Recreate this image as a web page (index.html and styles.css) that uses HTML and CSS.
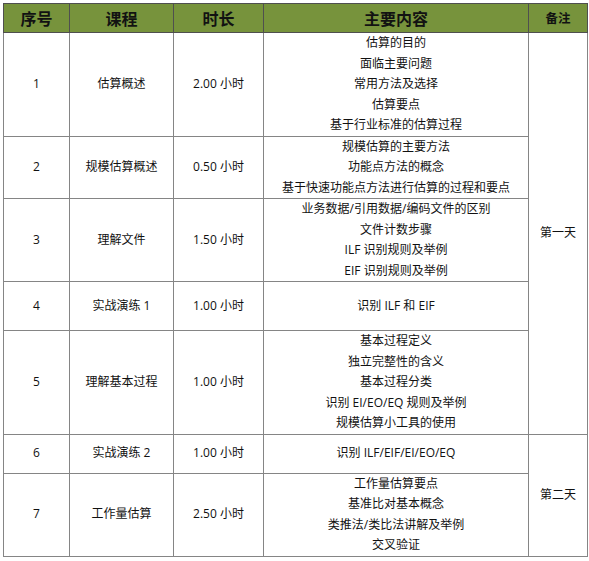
FILE: index.html
```html
<!DOCTYPE html>
<html lang="zh-CN">
<head>
<meta charset="utf-8">
<title>课程安排</title>
<link rel="stylesheet" href="styles.css">
</head>
<body>
<table class="schedule">
  <colgroup>
    <col class="c-no">
    <col class="c-course">
    <col class="c-time">
    <col class="c-content">
    <col class="c-note">
  </colgroup>
  <thead>
    <tr class="head">
      <th>序号</th>
      <th>课程</th>
      <th>时长</th>
      <th>主要内容</th>
      <th class="small">备注</th>
    </tr>
  </thead>
  <tbody>
    <tr class="r1">
      <td>1</td>
      <td>估算概述</td>
      <td>2.00 小时</td>
      <td class="content">估算的目的<br>面临主要问题<br>常用方法及选择<br>估算要点<br>基于行业标准的估算过程</td>
      <td rowspan="5">第一天</td>
    </tr>
    <tr class="r2">
      <td>2</td>
      <td>规模估算概述</td>
      <td>0.50 小时</td>
      <td class="content">规模估算的主要方法<br>功能点方法的概念<br>基于快速功能点方法进行估算的过程和要点</td>
    </tr>
    <tr class="r3">
      <td>3</td>
      <td>理解文件</td>
      <td>1.50 小时</td>
      <td class="content">业务数据/引用数据/编码文件的区别<br>文件计数步骤<br>ILF 识别规则及举例<br>EIF 识别规则及举例</td>
    </tr>
    <tr class="r4">
      <td>4</td>
      <td>实战演练 1</td>
      <td>1.00 小时</td>
      <td class="content">识别 ILF 和 EIF</td>
    </tr>
    <tr class="r5">
      <td>5</td>
      <td>理解基本过程</td>
      <td>1.00 小时</td>
      <td class="content">基本过程定义<br>独立完整性的含义<br>基本过程分类<br>识别 EI/EO/EQ 规则及举例<br>规模估算小工具的使用</td>
    </tr>
    <tr class="r6">
      <td>6</td>
      <td>实战演练 2</td>
      <td>1.00 小时</td>
      <td class="content">识别 ILF/EIF/EI/EO/EQ</td>
      <td rowspan="2">第二天</td>
    </tr>
    <tr class="r7">
      <td>7</td>
      <td>工作量估算</td>
      <td>2.50 小时</td>
      <td class="content">工作量估算要点<br>基准比对基本概念<br>类推法/类比法讲解及举例<br>交叉验证</td>
    </tr>
  </tbody>
</table>
</body>
</html>
```

FILE: styles.css
```css
html, body {
  margin: 0;
  padding: 0;
  background: #ffffff;
}

body {
  padding: 3px 0 0 3px;
  font-family: "Open Sans", "Noto Sans CJK SC", sans-serif;
  font-size: 12px;
  color: #111111;
}

.schedule {
  border-collapse: collapse;
  table-layout: fixed;
  width: 584px;
}

.c-no { width: 66px; }
.c-course { width: 104px; }
.c-time { width: 90px; }
.c-content { width: 265px; }
.c-note { width: 59px; }

.schedule th,
.schedule td {
  border: 1px solid #858585;
  padding: 0;
  text-align: center;
  vertical-align: middle;
  line-height: 20.5px;
}

.head th {
  background: #77933c;
  border-color: #4f4f4f;
  font-family: "Noto Sans CJK SC", sans-serif;
  font-weight: 700;
  font-size: 16px;
  color: #121212;
  height: 28px;
}

.head th.small {
  font-size: 12.5px;
}

.r1 { height: 103px; }
.r2 { height: 60px; }
.r3 { height: 83px; }
.r4 { height: 49px; }
.r5 { height: 102px; }
.r6 { height: 39px; }
.r7 { height: 83px; }
```
